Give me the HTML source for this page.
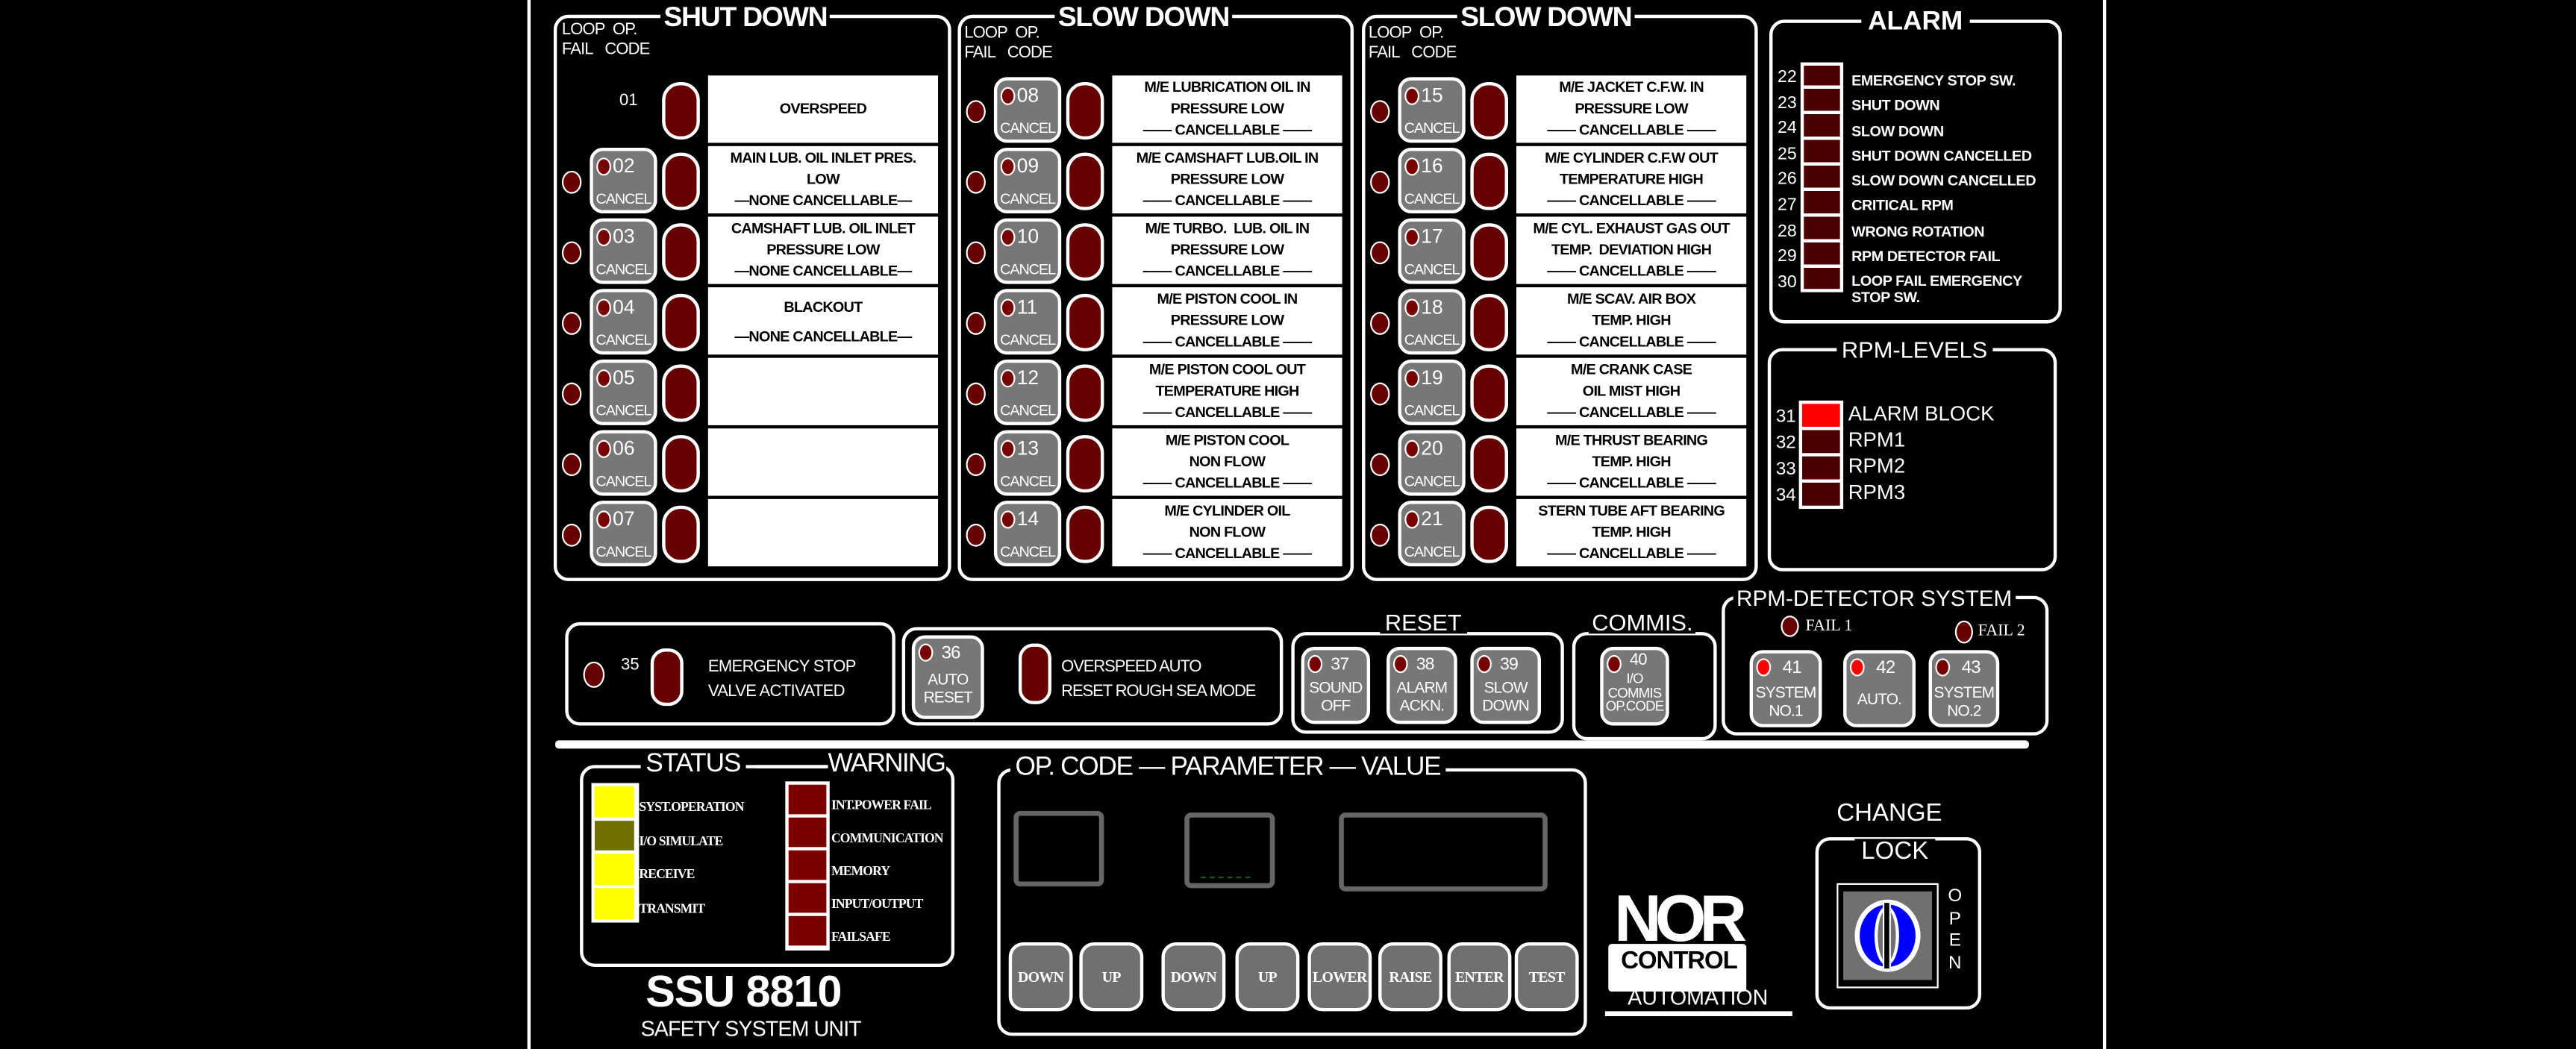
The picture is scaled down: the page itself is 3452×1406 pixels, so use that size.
<!DOCTYPE html>
<html><head><meta charset="utf-8"><style>
html,body{margin:0;padding:0;background:#000;width:3452px;height:1406px;overflow:hidden}
#s{position:absolute;left:0;top:0;width:1568px;height:639px;transform:scale(2.2015,2.2003);transform-origin:0 0;font-family:"Liberation Sans Narrow","Liberation Sans",sans-serif;color:#fff;font-weight:bold}
#s div{position:absolute;box-sizing:border-box}
.bx{border:2px solid #fff;border-radius:9px}
.tt{background:#000;padding:0 2px;line-height:1;white-space:nowrap}
.hd{font-size:10px;line-height:12px;font-weight:normal;letter-spacing:-0.4px}
.row{height:43px;width:240px}
.lf{left:5px;top:15px;width:12px;height:14px;border:1.5px solid #fff;border-radius:50%;background:#600}
.cb{left:22px;top:1px;width:41px;height:40px;border:2px solid #fff;border-radius:8px;background:#777}
.cb .l{left:2px;top:4px;width:9px;height:11px;border:1px solid #fff;border-radius:50%;background:#700}
.cb .n{left:12px;top:2px;font-size:12px;font-weight:normal}
.cb .c{left:0;width:37px;bottom:2px;text-align:center;font-size:9px;font-weight:normal;letter-spacing:-0.5px}
.ov{left:66px;top:4px;width:23px;height:35px;border:2px solid #fff;border-radius:11px;background:#600}
.lb{left:94px;top:0;width:140px;height:41px;background:#fff;color:#000;font-size:9px;line-height:13px;text-align:center;padding-top:1px;white-space:nowrap;letter-spacing:-0.35px}
.at{font-size:9px;white-space:nowrap;line-height:1;letter-spacing:-0.2px}
.btn{border:2px solid #fff;border-radius:8px;background:#777;text-align:center;font-size:9.5px;font-weight:normal;line-height:11px;letter-spacing:-0.4px}
.btn .l{left:2px;top:3px;width:9px;height:11px;border:1px solid #fff;border-radius:50%;background:#700}
.kb{top:574px;height:42px;width:39px;border:2px solid #fff;border-radius:9px;background:#707070;font-family:"Liberation Serif",serif;font-size:9px;text-align:center;line-height:38px;letter-spacing:-0.3px}
.cr{font-family:"Liberation Serif",serif;font-weight:bold;font-size:8px;letter-spacing:-0.4px;white-space:nowrap}
</style></head><body><div id="s">
<div style="left:321px;top:0;width:2px;height:639px;background:#fff"></div>
<div style="left:1280px;top:0;width:2px;height:639px;background:#fff"></div>

<!-- SHUT DOWN -->
<div class="bx" style="left:337px;top:9px;width:242px;height:345px"></div>
<div class="tt" style="left:402px;top:2px;font-size:17px;letter-spacing:-0.6px">SHUT DOWN</div>
<div class="hd" style="left:342px;top:13px">LOOP&nbsp; OP.<br>FAIL&nbsp;&nbsp; CODE</div>
<div style="left:337px;top:0">
<div class="row" style="top:46px"><div style="left:40px;top:10px;font-size:10px;font-weight:normal">01</div><div class="ov"></div><div class="lb" style="padding-top:14px">OVERSPEED</div></div>
<div class="row" style="top:89px"><div class="lf"></div><div class="cb"><div class="l"></div><div class="n">02</div><div class="c">CANCEL</div></div><div class="ov"></div><div class="lb">MAIN LUB. OIL INLET PRES.<br>LOW<br>—NONE CANCELLABLE—</div></div>
<div class="row" style="top:132px"><div class="lf"></div><div class="cb"><div class="l"></div><div class="n">03</div><div class="c">CANCEL</div></div><div class="ov"></div><div class="lb">CAMSHAFT LUB. OIL INLET<br>PRESSURE LOW<br>—NONE CANCELLABLE—</div></div>
<div class="row" style="top:175px"><div class="lf"></div><div class="cb"><div class="l"></div><div class="n">04</div><div class="c">CANCEL</div></div><div class="ov"></div><div class="lb" style="line-height:18px;padding-top:3px">BLACKOUT<br>—NONE CANCELLABLE—</div></div>
<div class="row" style="top:218px"><div class="lf"></div><div class="cb"><div class="l"></div><div class="n">05</div><div class="c">CANCEL</div></div><div class="ov"></div><div class="lb"></div></div>
<div class="row" style="top:261px"><div class="lf"></div><div class="cb"><div class="l"></div><div class="n">06</div><div class="c">CANCEL</div></div><div class="ov"></div><div class="lb"></div></div>
<div class="row" style="top:304px"><div class="lf"></div><div class="cb"><div class="l"></div><div class="n">07</div><div class="c">CANCEL</div></div><div class="ov"></div><div class="lb"></div></div>
</div>

<!-- SLOW DOWN 1 -->
<div class="bx" style="left:583px;top:9px;width:241px;height:345px"></div>
<div class="tt" style="left:642px;top:2px;font-size:17px;letter-spacing:-0.6px">SLOW DOWN</div>
<div class="hd" style="left:587px;top:15px">LOOP&nbsp; OP.<br>FAIL&nbsp;&nbsp; CODE</div>
<div style="left:583px;top:0">
<div class="row" style="top:46px"><div class="lf"></div><div class="cb"><div class="l"></div><div class="n">08</div><div class="c">CANCEL</div></div><div class="ov"></div><div class="lb">M/E LUBRICATION OIL IN<br>PRESSURE LOW<br>—— CANCELLABLE ——</div></div>
<div class="row" style="top:89px"><div class="lf"></div><div class="cb"><div class="l"></div><div class="n">09</div><div class="c">CANCEL</div></div><div class="ov"></div><div class="lb">M/E CAMSHAFT LUB.OIL IN<br>PRESSURE LOW<br>—— CANCELLABLE ——</div></div>
<div class="row" style="top:132px"><div class="lf"></div><div class="cb"><div class="l"></div><div class="n">10</div><div class="c">CANCEL</div></div><div class="ov"></div><div class="lb">M/E TURBO.&nbsp; LUB. OIL IN<br>PRESSURE LOW<br>—— CANCELLABLE ——</div></div>
<div class="row" style="top:175px"><div class="lf"></div><div class="cb"><div class="l"></div><div class="n">11</div><div class="c">CANCEL</div></div><div class="ov"></div><div class="lb">M/E PISTON COOL IN<br>PRESSURE LOW<br>—— CANCELLABLE ——</div></div>
<div class="row" style="top:218px"><div class="lf"></div><div class="cb"><div class="l"></div><div class="n">12</div><div class="c">CANCEL</div></div><div class="ov"></div><div class="lb">M/E PISTON COOL OUT<br>TEMPERATURE HIGH<br>—— CANCELLABLE ——</div></div>
<div class="row" style="top:261px"><div class="lf"></div><div class="cb"><div class="l"></div><div class="n">13</div><div class="c">CANCEL</div></div><div class="ov"></div><div class="lb">M/E PISTON COOL<br>NON FLOW<br>—— CANCELLABLE ——</div></div>
<div class="row" style="top:304px"><div class="lf"></div><div class="cb"><div class="l"></div><div class="n">14</div><div class="c">CANCEL</div></div><div class="ov"></div><div class="lb">M/E CYLINDER OIL<br>NON FLOW<br>—— CANCELLABLE ——</div></div>
</div>

<!-- SLOW DOWN 2 -->
<div class="bx" style="left:829px;top:9px;width:241px;height:345px"></div>
<div class="tt" style="left:887px;top:2px;font-size:17px;letter-spacing:-0.6px">SLOW DOWN</div>
<div class="hd" style="left:833px;top:15px">LOOP&nbsp; OP.<br>FAIL&nbsp;&nbsp; CODE</div>
<div style="left:829px;top:0">
<div class="row" style="top:46px"><div class="lf"></div><div class="cb"><div class="l"></div><div class="n">15</div><div class="c">CANCEL</div></div><div class="ov"></div><div class="lb">M/E JACKET C.F.W. IN<br>PRESSURE LOW<br>—— CANCELLABLE ——</div></div>
<div class="row" style="top:89px"><div class="lf"></div><div class="cb"><div class="l"></div><div class="n">16</div><div class="c">CANCEL</div></div><div class="ov"></div><div class="lb">M/E CYLINDER C.F.W OUT<br>TEMPERATURE HIGH<br>—— CANCELLABLE ——</div></div>
<div class="row" style="top:132px"><div class="lf"></div><div class="cb"><div class="l"></div><div class="n">17</div><div class="c">CANCEL</div></div><div class="ov"></div><div class="lb">M/E CYL. EXHAUST GAS OUT<br>TEMP.&nbsp; DEVIATION HIGH<br>—— CANCELLABLE ——</div></div>
<div class="row" style="top:175px"><div class="lf"></div><div class="cb"><div class="l"></div><div class="n">18</div><div class="c">CANCEL</div></div><div class="ov"></div><div class="lb">M/E SCAV. AIR BOX<br>TEMP. HIGH<br>—— CANCELLABLE ——</div></div>
<div class="row" style="top:218px"><div class="lf"></div><div class="cb"><div class="l"></div><div class="n">19</div><div class="c">CANCEL</div></div><div class="ov"></div><div class="lb">M/E CRANK CASE<br>OIL MIST HIGH<br>—— CANCELLABLE ——</div></div>
<div class="row" style="top:261px"><div class="lf"></div><div class="cb"><div class="l"></div><div class="n">20</div><div class="c">CANCEL</div></div><div class="ov"></div><div class="lb">M/E THRUST BEARING<br>TEMP. HIGH<br>—— CANCELLABLE ——</div></div>
<div class="row" style="top:304px"><div class="lf"></div><div class="cb"><div class="l"></div><div class="n">21</div><div class="c">CANCEL</div></div><div class="ov"></div><div class="lb">STERN TUBE AFT BEARING<br>TEMP. HIGH<br>—— CANCELLABLE ——</div></div>
</div>

<!-- ALARM -->
<div class="bx" style="left:1077px;top:12px;width:178px;height:185px"></div>
<div class="tt" style="left:1133px;top:6px;font-size:16px;padding:0 4px">ALARM</div>
<div style="left:1096px;top:38px;width:26px;height:140px;background:#fff"></div>
<div style="left:1082px;top:40px;font-size:10.5px;font-weight:normal;line-height:15.6px">22<br>23<br>24<br>25<br>26<br>27<br>28<br>29<br>30</div>
<div style="left:1098px;top:40px;width:22px;height:136px;background:#4a0000"></div>
<div style="left:1097px;top:52px;width:24px;height:124px;background:repeating-linear-gradient(#fff 0 2px,transparent 2px 15.6px)"></div>
<div class="at" style="left:1127px;top:42px;line-height:15.3px">EMERGENCY STOP SW.<br>SHUT DOWN<br>SLOW DOWN<br>SHUT DOWN CANCELLED<br>SLOW DOWN CANCELLED<br>CRITICAL RPM<br>WRONG ROTATION<br>RPM DETECTOR FAIL<br>LOOP FAIL EMERGENCY</div>
<div class="at" style="left:1127px;top:177px">STOP SW.</div>

<!-- RPM LEVELS -->
<div class="bx" style="left:1076px;top:212px;width:176px;height:136px"></div>
<div class="tt" style="left:1118px;top:206px;font-size:14px;font-weight:normal;padding:0 3px">RPM-LEVELS</div>
<div style="left:1095px;top:244px;width:27px;height:66px;background:#fff"></div>
<div style="left:1097px;top:246px;width:23px;height:14px;background:#f00"></div>
<div style="left:1097px;top:262px;width:23px;height:14px;background:#4a0000"></div>
<div style="left:1097px;top:278px;width:23px;height:14px;background:#4a0000"></div>
<div style="left:1097px;top:294px;width:23px;height:14px;background:#4a0000"></div>
<div style="left:1081px;top:246px;font-size:11px;font-weight:normal;line-height:16px">31<br>32<br>33<br>34</div>
<div style="left:1125px;top:244px;font-size:12.5px;font-weight:normal;line-height:16px">ALARM BLOCK<br>RPM1<br>RPM2<br>RPM3</div>

<!-- Row 2 -->
<div class="bx" style="left:344px;top:379px;width:201px;height:63px"></div>
<div style="left:355px;top:403px;width:13px;height:16px;border:1.5px solid #fff;border-radius:50%;background:#600"></div>
<div style="left:378px;top:400px;font-size:10px;font-weight:normal">35</div>
<div style="left:396px;top:395px;width:20px;height:35px;border:2px solid #fff;border-radius:9px;background:#600"></div>
<div style="left:431px;top:399px;font-size:10px;font-weight:normal;line-height:15px;letter-spacing:-0.3px">EMERGENCY STOP<br>VALVE ACTIVATED</div>

<div class="bx" style="left:549px;top:382px;width:232px;height:60px"></div>
<div class="btn" style="left:555px;top:387px;width:44px;height:51px"><div class="l"></div><div style="left:16px;top:4px;font-size:11px">36</div><div style="left:0;width:40px;top:20px">AUTO<br>RESET</div></div>
<div style="left:620px;top:392px;width:20px;height:37px;border:2px solid #fff;border-radius:9px;background:#600"></div>
<div style="left:646px;top:399px;font-size:10px;font-weight:normal;line-height:15px;letter-spacing:-0.5px">OVERSPEED AUTO<br>RESET ROUGH SEA MODE</div>

<div class="bx" style="left:786px;top:385px;width:166px;height:62px"></div>
<div class="tt" style="left:840px;top:372px;font-size:14px;font-weight:normal;padding:0 3px">RESET</div>
<div class="btn" style="left:792px;top:394px;width:42px;height:47px"><div class="l"></div><div style="left:16px;top:4px;font-size:10.5px">37</div><div style="left:0;width:38px;top:18px">SOUND<br>OFF</div></div>
<div class="btn" style="left:844px;top:394px;width:43px;height:47px"><div class="l"></div><div style="left:16px;top:4px;font-size:10.5px">38</div><div style="left:0;width:39px;top:18px">ALARM<br>ACKN.</div></div>
<div class="btn" style="left:895px;top:394px;width:43px;height:47px"><div class="l"></div><div style="left:16px;top:4px;font-size:10.5px">39</div><div style="left:0;width:39px;top:18px">SLOW<br>DOWN</div></div>

<div class="bx" style="left:957px;top:385px;width:88px;height:66px"></div>
<div class="tt" style="left:967px;top:372px;font-size:14px;font-weight:normal;padding:0 2px">COMMIS.</div>
<div class="btn" style="left:974px;top:394px;width:42px;height:48px;line-height:8.5px;font-size:8.5px"><div class="l"></div><div style="left:16px;top:3px;font-size:10px">40</div><div style="left:0;width:38px;top:13px">I/O<br>COMMIS<br>OP.CODE</div></div>

<div class="bx" style="left:1048px;top:363px;width:199px;height:85px"></div>
<div class="tt" style="left:1055px;top:358px;font-size:13.5px;font-weight:normal;padding:0 2px">RPM-DETECTOR SYSTEM</div>
<div style="left:1084px;top:375px;width:11px;height:13px;border:1.5px solid #fff;border-radius:50%;background:#600"></div>
<div style="left:1099px;top:376px;font-size:10px;font-weight:normal;font-family:'Liberation Serif',serif">FAIL 1</div>
<div style="left:1190px;top:378px;width:11px;height:14px;border:1.5px solid #fff;border-radius:50%;background:#600"></div>
<div style="left:1204px;top:379px;font-size:10px;font-weight:normal;font-family:'Liberation Serif',serif">FAIL 2</div>
<div class="btn" style="left:1065px;top:396px;width:44px;height:47px"><div class="l" style="background:#f00"></div><div style="left:18px;top:4px;font-size:11px">41</div><div style="left:0;width:40px;top:19px">SYSTEM<br>NO.1</div></div>
<div class="btn" style="left:1122px;top:396px;width:44px;height:47px"><div class="l" style="background:#f00"></div><div style="left:18px;top:4px;font-size:11px">42</div><div style="left:0;width:40px;top:23px">AUTO.</div></div>
<div class="btn" style="left:1174px;top:396px;width:43px;height:47px"><div class="l"></div><div style="left:18px;top:4px;font-size:11px">43</div><div style="left:0;width:39px;top:19px">SYSTEM<br>NO.2</div></div>

<div style="left:338px;top:451px;width:897px;height:5px;background:#fff;border-radius:2px"></div>

<!-- STATUS / WARNING -->
<div class="bx" style="left:353px;top:466px;width:228px;height:123px"></div>
<div class="tt" style="left:390px;top:458px;font-size:16px;font-weight:normal;padding:0 3px;letter-spacing:-0.5px">STATUS</div>
<div class="tt" style="left:503px;top:458px;font-size:16px;font-weight:normal;padding:0 1px;letter-spacing:-0.8px">WARNING</div>
<div style="left:460px;top:466px;width:44px;height:2px;background:#fff"></div>
<div style="left:360px;top:477px;width:29px;height:85px;background:#fff"></div>
<div style="left:362px;top:479px;width:24px;height:19px;background:#ff0"></div>
<div style="left:362px;top:500px;width:24px;height:18px;background:#707000"></div>
<div style="left:362px;top:520px;width:24px;height:19px;background:#ff0"></div>
<div style="left:362px;top:541px;width:24px;height:19px;background:#ff0"></div>
<div class="cr" style="left:389px;top:482px;line-height:20.5px">SYST.OPERATION<br>I/O SIMULATE<br>RECEIVE<br>TRANSMIT</div>
<div style="left:478px;top:476px;width:27px;height:103px;background:#fff"></div>
<div style="left:480px;top:478px;width:23px;height:18px;background:#7a0000"></div>
<div style="left:480px;top:498px;width:23px;height:18px;background:#7a0000"></div>
<div style="left:480px;top:518px;width:23px;height:18px;background:#7a0000"></div>
<div style="left:480px;top:538px;width:23px;height:18px;background:#7a0000"></div>
<div style="left:480px;top:558px;width:23px;height:18px;background:#7a0000"></div>
<div class="cr" style="left:506px;top:481px;line-height:20px">INT.POWER FAIL<br>COMMUNICATION<br>MEMORY<br>INPUT/OUTPUT<br>FAILSAFE</div>
<div style="left:393px;top:588px;font-size:27px;line-height:32px;letter-spacing:-0.5px">SSU 8810</div>
<div style="left:390px;top:619px;font-size:13px;font-weight:normal;line-height:16px;letter-spacing:-0.4px">SAFETY SYSTEM UNIT</div>

<!-- PARAMETER -->
<div class="bx" style="left:607px;top:468px;width:359px;height:163px"></div>
<div class="tt" style="left:615px;top:460px;font-size:16px;font-weight:normal;padding:0 3px;letter-spacing:-0.6px">OP. CODE — PARAMETER — VALUE</div>
<div style="left:617px;top:494px;width:55px;height:46px;border:3px solid #666;border-radius:4px"></div>
<div style="left:721px;top:495px;width:55px;height:46px;border:3px solid #666;border-radius:4px"></div>
<div style="left:731px;top:534px;width:30px;height:1px;border-top:1px dashed #1a5a1a"></div>
<div style="left:815px;top:495px;width:127px;height:48px;border:3px solid #666;border-radius:4px"></div>
<div class="kb" style="left:614px">DOWN</div>
<div class="kb" style="left:657px">UP</div>
<div class="kb" style="left:707px">DOWN</div>
<div class="kb" style="left:752px">UP</div>
<div class="kb" style="left:796px">LOWER</div>
<div class="kb" style="left:839px">RAISE</div>
<div class="kb" style="left:881px">ENTER</div>
<div class="kb" style="left:922px">TEST</div>

<!-- LOGO -->
<div style="left:979px;top:575px;width:84px;height:29px;background:#fff;border-radius:2px"></div>
<div style="left:974px;top:540px;width:94px;text-align:center;font-family:'Liberation Sans',sans-serif;font-size:40px;font-weight:900;color:#fff;letter-spacing:-4px;line-height:40px">NOR</div>
<div style="left:981px;top:577px;width:82px;text-align:center;color:#000;font-family:'Liberation Sans',sans-serif;font-size:15px;font-weight:bold;line-height:18px;letter-spacing:-0.5px">CONTROL</div>
<div style="left:976px;top:600px;width:115px;text-align:center;font-family:'Liberation Sans',sans-serif;font-size:13px;font-weight:normal;line-height:15px">AUTOMATION</div>
<div style="left:977px;top:616px;width:114px;height:3px;background:#fff"></div>

<!-- CHANGE LOCK -->
<div class="bx" style="left:1105px;top:510px;width:101px;height:105px"></div>
<div style="left:1118px;top:488px;font-family:'Liberation Sans',sans-serif;font-size:15px;font-weight:normal;line-height:16px">CHANGE</div>
<div class="tt" style="left:1129px;top:511px;font-family:'Liberation Sans',sans-serif;font-size:15px;font-weight:normal;padding:0 4px">LOCK</div>
<div style="left:1118px;top:538px;width:62px;height:64px;border:1px solid #fff;background:#000"></div>
<div style="left:1122px;top:543px;width:54px;height:54px;background:#707070"></div>
<div style="left:1129px;top:548px;width:40px;height:44px;border:3px solid #fff;border-radius:50%;background:#00f"></div>
<div style="left:1141px;top:552px;width:15px;height:36px;border:2px solid #fff;border-radius:50%;background:#707070"></div>
<div style="left:1146px;top:549px;width:5px;height:42px;background:#000;border:1px solid #fff"></div>
<div style="left:1184px;top:540px;width:12px;font-family:'Liberation Sans',sans-serif;font-size:11px;font-weight:normal;line-height:13.5px;text-align:center">O<br>P<br>E<br>N</div>
</div></body></html>
